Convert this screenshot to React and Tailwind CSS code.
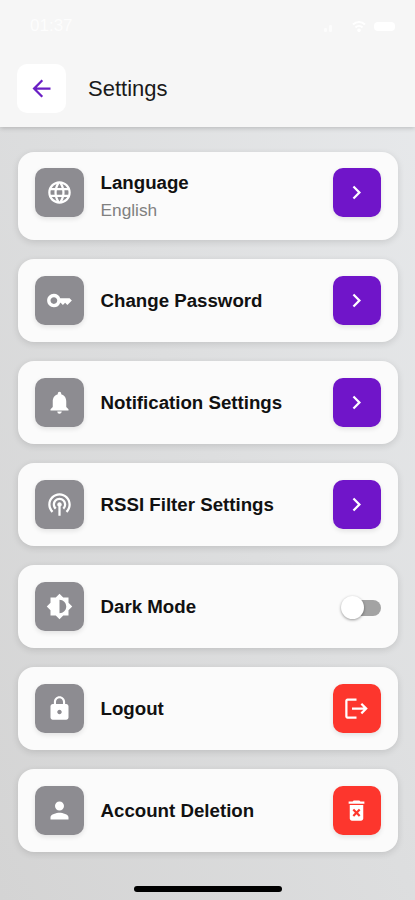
import {
  MdArrowBack,
  MdBrightness6,
  MdChevronRight,
  MdDeleteForever,
  MdKey,
  MdLanguage,
  MdLock,
  MdLogout,
  MdNotifications,
  MdPerson,
  MdPodcasts,
} from "react-icons/md";

const items = [
  { label: "Language", value: "English", icon: MdLanguage, action: "open" },
  { label: "Change Password", icon: MdKey, action: "open" },
  { label: "Notification Settings", icon: MdNotifications, action: "open" },
  { label: "RSSI Filter Settings", icon: MdPodcasts, action: "open" },
  { label: "Dark Mode", icon: MdBrightness6, action: "toggle" },
  { label: "Logout", icon: MdLock, action: "logout" },
  { label: "Account Deletion", icon: MdPerson, action: "delete" },
];

const actions = {
  open: { icon: MdChevronRight, color: "bg-[#7015c9]" },
  logout: { icon: MdLogout, color: "bg-[#fd362d]" },
  delete: { icon: MdDeleteForever, color: "bg-[#fd362d]" },
};

function Tile({ icon: Icon, color }) {
  return (
    <span
      className={`flex size-[48.5px] shrink-0 items-center justify-center rounded-[10px] text-white shadow-[0_2px_5px_rgba(0,0,0,0.1)] ${color}`}
    >
      <Icon size={27} />
    </span>
  );
}

function Toggle() {
  return (
    <button
      role="switch"
      aria-checked="false"
      aria-label="Dark Mode"
      className="mt-[3px] flex h-4 w-[38px] items-center rounded-full bg-[#a3a3a3]"
    >
      <span className="-ml-[2.5px] size-[23px] shrink-0 rounded-full bg-white shadow-[0_1px_3px_rgba(0,0,0,0.4)]" />
    </button>
  );
}

function SettingRow({ item }) {
  const action = actions[item.action];

  return (
    <li
      className={`flex rounded-2xl bg-[#fbfbfb] px-[17px] shadow-[0_2px_7px_rgba(0,0,0,0.12)] ${
        item.value ? "h-[87.5px] items-start pt-4" : "h-[82.5px] items-center"
      }`}
    >
      <Tile icon={item.icon} color="bg-[#8d8c91]" />
      <div className={`ml-[17px] flex-1 ${item.value ? "" : "pt-[2px]"}`}>
        <p className="text-[18.7px] leading-[30px] font-bold text-[#111]">
          {item.label}
        </p>
        {item.value && (
          <p className="text-[17.3px] leading-6 text-[#808080]">{item.value}</p>
        )}
      </div>
      {action ? (
        <button aria-label={item.label}>
          <Tile icon={action.icon} color={action.color} />
        </button>
      ) : (
        <Toggle />
      )}
    </li>
  );
}

function StatusBar() {
  return (
    <div className="flex h-[52px] items-center justify-between pr-[20px] pl-[30px] text-white">
      <span className="text-[17px] opacity-80">01:37</span>
      <div className="flex items-center gap-[8px]">
        <svg
          className="opacity-70"
          width="20"
          height="12"
          viewBox="0 0 20 12"
          fill="currentColor"
        >
          <rect x="0" y="8" width="3" height="4" rx="1" />
          <rect x="5" y="5" width="3" height="7" rx="1" />
        </svg>
        <svg
          width="14"
          height="12"
          viewBox="0 0 14 12"
          fill="none"
          stroke="currentColor"
          strokeWidth="2"
        >
          <path d="M1 4.5c3.5-3.5 8.5-3.5 12 0M3.5 7.5c2-2 5-2 7 0" />
          <circle cx="7" cy="10.3" r="0.8" />
        </svg>
        <span className="h-[9px] w-[21px] rounded-[4px] bg-white" />
      </div>
    </div>
  );
}

export default function App() {
  return (
    <div className="flex h-[900px] w-[415px] flex-col overflow-hidden bg-linear-to-bl from-[#e8eaec] via-[#dddedf] to-[#d4d4d4] font-['Liberation_Sans',Arial,sans-serif]">
      <header className="h-[127px] shrink-0 bg-[#f6f6f6] shadow-[0_1px_5px_rgba(0,0,0,0.2)]">
        <StatusBar />
        <div className="mt-[12px] flex items-center pl-[17px]">
          <button
            aria-label="Back"
            className="flex size-[48.5px] items-center justify-center rounded-[10px] bg-white text-[#6a1fc4]"
          >
            <MdArrowBack size={27} />
          </button>
          <h1 className="ml-[22.5px] pt-px text-[22px] leading-7 text-[#1a1a1a]">
            Settings
          </h1>
        </div>
      </header>

      <ul className="flex flex-col gap-[19.5px] pt-[25px] pr-[17px] pl-[18px]">
        {items.map((item) => (
          <SettingRow key={item.label} item={item} />
        ))}
      </ul>

      <div className="mx-auto mt-auto mb-[8.5px] h-[5.5px] w-[148px] rounded-full bg-black" />
    </div>
  );
}
